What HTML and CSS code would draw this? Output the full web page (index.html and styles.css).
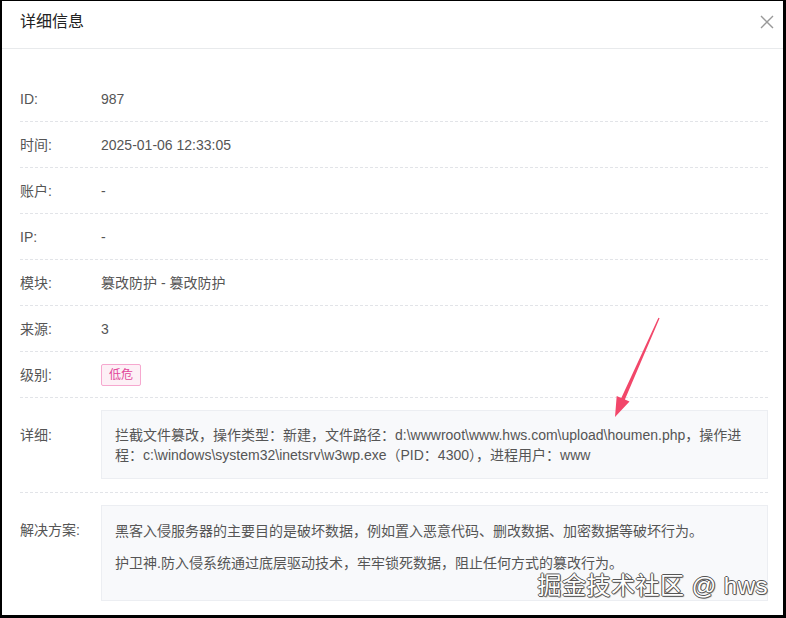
FILE: index.html
```html
<!DOCTYPE html>
<html lang="zh-CN">
<head>
    <meta charset="UTF-8">
    <meta name="viewport" content="width=device-width, initial-scale=1.0">
    <title>详细信息</title>
    <link rel="stylesheet" href="styles.css">
</head>
<body>
    <div class="frame">
        <div class="modal-header">
            <span class="modal-title">详细信息</span>
            <svg class="close-icon" width="14" height="14" viewBox="0 0 14 14">
                <path d="M1 1 L13 13 M13 1 L1 13" stroke="#999" stroke-width="1.4" fill="none"/>
            </svg>
        </div>

        <div class="modal-body">
            <div class="row">
                <div class="label">ID:</div>
                <div class="value">987</div>
            </div>
            <div class="row">
                <div class="label">时间:</div>
                <div class="value">2025-01-06 12:33:05</div>
            </div>
            <div class="row">
                <div class="label">账户:</div>
                <div class="value">-</div>
            </div>
            <div class="row">
                <div class="label">IP:</div>
                <div class="value">-</div>
            </div>
            <div class="row">
                <div class="label">模块:</div>
                <div class="value">篡改防护 - 篡改防护</div>
            </div>
            <div class="row">
                <div class="label">来源:</div>
                <div class="value">3</div>
            </div>
            <div class="row">
                <div class="label">级别:</div>
                <div class="value"><span class="tag">低危</span></div>
            </div>
            <div class="row row-box">
                <div class="label">详细:</div>
                <div class="box box-detail">拦截文件篡改，操作类型：新建，文件路径：d:\wwwroot\www.hws.com\upload\houmen.php，操作进程：c:\windows\system32\inetsrv\w3wp.exe（PID：4300），进程用户：www</div>
            </div>
            <div class="row row-box row-last">
                <div class="label">解决方案:</div>
                <div class="box box-solution">
                    <p>黑客入侵服务器的主要目的是破坏数据，例如置入恶意代码、删改数据、加密数据等破坏行为。</p>
                    <p>护卫神.防入侵系统通过底层驱动技术，牢牢锁死数据，阻止任何方式的篡改行为。</p>
                </div>
            </div>
        </div>

        <!-- annotation arrow drawn over the screenshot -->
        <svg class="arrow" width="786" height="618" viewBox="0 0 786 618">
            <polygon points="658.4,317.7 659.6,318.3 624.9,399.5 629.5,401.5 615,417 616.7,395.9 621.3,397.9" fill="#f2476a"/>
        </svg>

        <div class="watermark">掘金技术社区 @ hws</div>
    </div>
</body>
</html>
```

FILE: styles.css
```css
body {
    margin: 0;
    padding: 0;
    background-color: #000;
    font-family: "Liberation Sans", "Noto Sans CJK SC", sans-serif;
}

.frame {
    position: relative;
    width: 786px;
    height: 618px;
    box-sizing: border-box;
    border-style: solid;
    border-color: #000;
    border-width: 1px 3px 3px 2px;
    background-color: white;
    overflow: hidden;
}

.modal-header {
    height: 48px;
    box-sizing: border-box;
    padding: 10px 9px 0 18px;
    display: flex;
    justify-content: space-between;
    align-items: flex-start;
    border-bottom: 1px solid #e8eaec;
}

.modal-title {
    font-size: 16px;
    line-height: 22px;
    color: #222;
}

.close-icon {
    margin-top: 4px;
}

.modal-body {
    padding: 27px 15px 0 18px;
}

.row {
    display: flex;
    align-items: center;
    height: 45px;
    border-bottom: 1px dashed #e2e4e8;
    font-size: 14px;
    color: #555;
}

.label {
    width: 81px;
    flex-shrink: 0;
    line-height: 20px;
}

.value {
    line-height: 20px;
}

.tag {
    display: inline-block;
    padding: 0 7px;
    line-height: 20px;
    font-size: 12px;
    color: #e2479a;
    background-color: #fdf0f6;
    border: 1px solid #f6a8cf;
    border-radius: 2px;
}

.row-box {
    height: auto;
    align-items: flex-start;
    padding: 12px 0 13px;
}

.row-box .label {
    margin-top: 15px;
}

.row-last {
    border-bottom: none;
}

.box {
    flex: 1;
    background-color: #f8f9fb;
    border: 1px solid #eceef2;
    line-height: 20px;
    color: #555;
}

.box-detail {
    padding: 14px 14px 13px 13px;
}

.box-solution {
    padding: 15px 14px 15px 13px;
}

.box-solution p {
    margin: 0 0 12px;
}

.arrow {
    position: absolute;
    left: -2px;
    top: -1px;
    pointer-events: none;
}

.watermark {
    position: absolute;
    right: 15px;
    top: 565px;
    font-size: 24px;
    letter-spacing: 0.5px;
    color: #fff;
    text-shadow: 1px 0 0 #555, -1px 0 0 #555, 0 1px 0 #555, 0 -1px 0 #555, 1px 1px 1px #777;
}
```
